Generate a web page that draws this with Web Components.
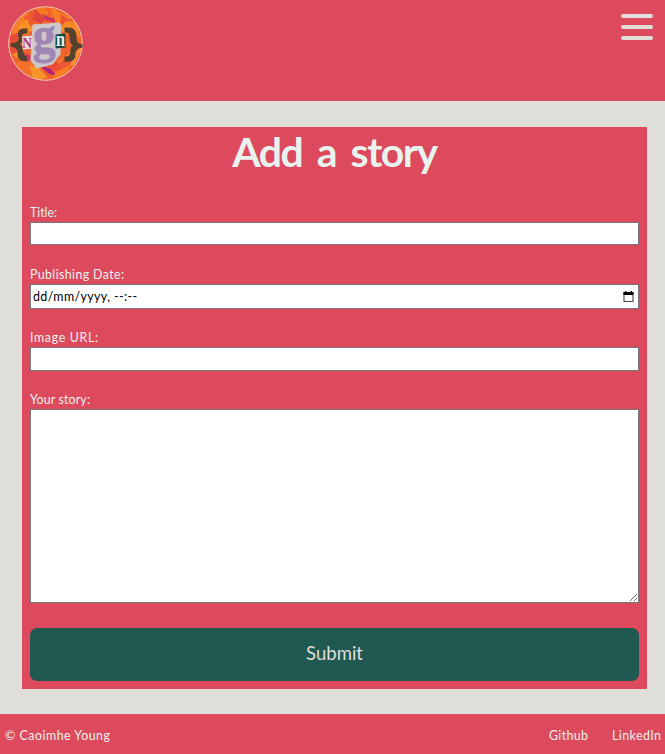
<!DOCTYPE html>
<html lang="en">
<head>
<meta charset="utf-8">
<title>Add a story</title>
<style>
html,body{margin:0;height:100%}
body{background:#dfdeda;color:#e8f3ed;font-family:Lato,"Open Sans",sans-serif;font-size:12.4px;overflow:hidden}
</style>
</head>
<body>
<story-page></story-page>
<script>
const define = (name, html, setup) => customElements.define(name, class extends HTMLElement {
  connectedCallback() {
    if (this.shadowRoot) return;
    const t = document.createElement('template');
    t.innerHTML = html;
    this.attachShadow({mode: 'open'}).append(t.content.cloneNode(true));
    if (setup) setup(this, this.shadowRoot);
  }
});

// Text tracked so that it fills the given width.
define('tracked-text', `<style>:host{display:inline-block;white-space:pre}span{display:inline-block}</style><span><slot></slot></span>`, (host, root) => {
  const span = root.querySelector('span');
  const w = +host.getAttribute('width');
  const n = host.textContent.length;
  const natural = span.getBoundingClientRect().width;
  span.style.letterSpacing = (w - natural) / Math.max(1, n - 1) + 'px';
  host.style.width = w + 'px';
});

define('site-logo', `<style>:host{display:block;width:76px;height:76px}svg{display:block}</style>
<svg width="76" height="76" viewBox="0.5 0.5 76 76">
<defs><clipPath id="c"><circle cx="38" cy="38" r="36.5"/></clipPath>
<filter id="s" x="-10%" y="-10%" width="120%" height="120%"><feGaussianBlur stdDeviation=".6"/></filter></defs>
<circle cx="38" cy="38" r="37" fill="#f0632a"/>
<g clip-path="url(#c)"><g filter="url(#s)">
<path d="M5 22L18 6l8 11-5 12L5 32z" fill="#f5802a"/>
<path d="M16 12l12-8-2 19-7-6z" fill="#ee5a30"/>
<path d="M10 22l10-9 2 8 16-5-12 11z" fill="#fa9127"/>
<path d="M27 4l12 9-5 6-9-5z" fill="#e0443f"/>
<path d="M28 2l7 9 6-3-3-7z" fill="#f57c20"/>
<path d="M34 8l10 5 7-4-3 8-9-2z" fill="#c93562"/>
<path d="M43 2l9 5 12 5-8 9-8-4z" fill="#f77f25"/>
<path d="M53 8l12 9 7 12-10-8-9 4z" fill="#ec5233"/>
<path d="M58 16l-7 8 9 5 4-8 9 14-3-19z" fill="#f98c27"/>
<path d="M1 31l14-6-7 15 9 7-13 3z" fill="#e84c38"/>
<path d="M4 49l9-4 9 8 5 12-10-8z" fill="#f98824"/>
<path d="M13 46l10 4 6 8-8-2z" fill="#d23a58"/>
<path d="M6 57l16-2 7 17-10-2z" fill="#f4702a"/>
<path d="M22 60l9 2 9 10-14 3z" fill="#f79527"/>
<path d="M32 60l11 3 7 8-9-3z" fill="#b3227f"/>
<path d="M39 60l18-5 5 5-13 5z" fill="#ee4930"/>
<path d="M50 57l16-12 9-4-8 18-12 3z" fill="#f89230"/>
<path d="M58 51l8 3-10 14-8-6z" fill="#ea5636"/>
<path d="M48 67l15-8-4 13-15 3z" fill="#f97c22"/>
<path d="M66 28l8 6-5 14-5 2z" fill="#f26725"/>
</g></g>
<circle cx="38" cy="38" r="36.8" fill="none" stroke="#f4c7bc" stroke-width="1"/>
<path d="M20 23l-3 0c-7 0-7 5-6 9 1 4-2 5-8 6v3c5 1 8 3 7 7 0 5 2 8 10 8v-5c-4 0-4-4-5-8 0-3-1-4-3-4 2-1 3-3 3-6-1-4 0-5 5-5zM57 22l3 0c7 0 9 4 9 9 0 5 1 7 6 8v3c-6 1-8 4-7 8 0 4-4 7-11 6v-5c5 0 6-2 6-6 0-3 1-5 3-5-3-1-4-4-4-8 0-4-1-5-5-5z" fill="#54422f"/>
<path d="M25 19l27-2 2 3-1 29-8 10-16 4-6-8z" fill="#cdc8c9"/>
<text x="25.5" y="46" font-family="Liberation Serif" font-weight="bold" font-size="50" fill="#9f86b5" stroke="#9f86b5" stroke-width=".9" textLength="22.5" lengthAdjust="spacingAndGlyphs">g</text>
<path d="M14.3 31l10-1 1 13-10 1z" fill="#eadbe0"/>
<text x="14.8" y="42.3" font-family="Liberation Serif" font-weight="bold" font-size="15" fill="#b63a6c" textLength="9.7" lengthAdjust="spacingAndGlyphs">N</text>
<path d="M48 29l10-1v14l-10 1z" fill="#10493f"/>
<text x="48.6" y="40.5" font-family="Liberation Serif" font-weight="bold" font-size="20" fill="#e8efe8" textLength="9" lengthAdjust="spacingAndGlyphs">n</text>
</svg>`);

define('menu-button', `<style>:host{display:flex;flex-direction:column;gap:7px;width:32px}i{height:4px;border-radius:2px;background:#dfdeda}</style><i></i><i></i><i></i>`);

define('site-header', `<style>:host{display:flex;justify-content:space-between;align-items:flex-start;box-sizing:border-box;height:101px;padding:6px 12px 0 8px;background:#de4a5d}menu-button{margin-top:8px}</style><site-logo></site-logo><menu-button></menu-button>`);

define('form-field', `<style>
:host{display:flex;flex-direction:column}
label{box-sizing:border-box;height:18px;line-height:16px;padding-top:1px}
.box{box-sizing:border-box;border:1px solid #767676;background:#fff;color:#000;display:flex;align-items:center;justify-content:space-between;flex:1;margin:0;padding:0 4px 0 2px;width:100%;border-radius:0;outline:0;font:inherit;min-height:0}
textarea.box{display:block;resize:vertical}
</style><label><slot name="label"></slot></label>`, (host, root) => {
  const kind = host.getAttribute('kind') || 'text';
  host.style.height = host.getAttribute('height') + 'px';
  const box = document.createElement(kind === 'date' ? 'div' : kind === 'area' ? 'textarea' : 'input');
  box.className = 'box';
  if (kind === 'date') box.innerHTML = `<tracked-text width="104">dd/mm/yyyy, --:--</tracked-text><svg width="11" height="12" viewBox="0 0 11 12"><path d="M1 1.5h9v9H1z" fill="none" stroke="#444" stroke-width="1.1"/><path d="M.5 1h10v3H.5zM2 0h1.3v2H2zM7.7 0H9v2H7.7z"/></svg>`;
  root.append(box);
});

define('submit-button', `<style>:host{display:block}button{display:flex;align-items:center;justify-content:center;width:100%;height:53px;border:0;border-radius:7px;background:#1f5951;color:#dfdeda;font:18.5px Lato,sans-serif;padding:0 0 3px}</style><button><slot></slot></button>`);

define('story-form', `<style>
:host{display:flex;flex-direction:column;box-sizing:border-box;margin:26px 18px 25px 22px;height:562px;padding:0 8px 8px;background:#de4a5d}
h1{margin:0 0 27px;height:50px;line-height:50px;font-size:41px;font-weight:700;word-spacing:6px;text-align:center}
form-field{margin-bottom:21px}.date,.image{margin-bottom:20px}.last{margin-bottom:25px}
</style>
<h1><tracked-text width="206">Add a story</tracked-text></h1>
<form-field height="41"><tracked-text slot="label" width="27">Title:</tracked-text></form-field>
<form-field class="date" height="43" kind="date"><tracked-text slot="label" width="94">Publishing Date:</tracked-text></form-field>
<form-field class="image" height="42"><tracked-text slot="label" width="68">Image URL:</tracked-text></form-field>
<form-field class="last" height="212" kind="area"><tracked-text slot="label" width="60">Your story:</tracked-text></form-field>
<submit-button><tracked-text width="57">Submit</tracked-text></submit-button>`);

define('site-footer', `<style>:host{display:flex;align-items:center;box-sizing:border-box;height:40px;padding:2px 4px 0 5px;background:#de4a5d}nav{margin-left:auto;display:flex;gap:24px}a{color:inherit}</style>
<tracked-text width="105">© Caoimhe Young</tracked-text><nav><a><tracked-text width="39">Github</tracked-text></a><a><tracked-text width="49">LinkedIn</tracked-text></a></nav>`);

define('story-page', `<style>:host{display:block}</style><site-header></site-header><story-form></story-form><site-footer></site-footer>`);
</script>
</body>
</html>
